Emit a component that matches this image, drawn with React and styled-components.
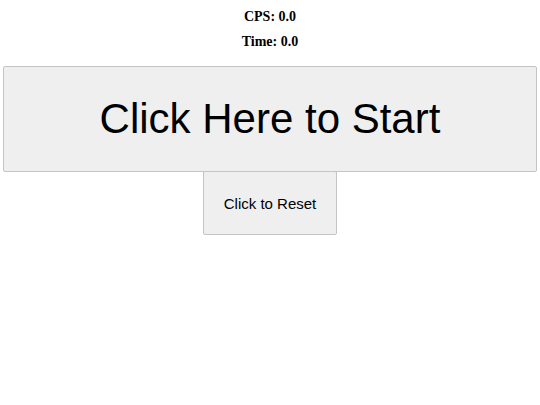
import React, { useState } from 'react'
import styled, { createGlobalStyle } from 'styled-components'

const GlobalStyle = createGlobalStyle`
  body {
    margin: 0;
    background: #fff;
    font-family: "Liberation Serif", "Times New Roman", serif;
  }
`

export default function App() {
  const [clicks, setClicks] = useState(0)
  const [time, setTime] = useState(0)

  const cps = time > 0 ? clicks / time : 0

  return (
    <Page>
      <GlobalStyle />
      <Stat>CPS: {cps.toFixed(1)}</Stat>
      <Stat>Time: {time.toFixed(1)}</Stat>
      <StartButton onClick={() => setClicks(clicks + 1)}>
        Click Here to Start
      </StartButton>
      <ResetButton onClick={() => { setClicks(0); setTime(0) }}>
        Click to Reset
      </ResetButton>
    </Page>
  )
}

// styled components
const Page = styled.div`
  display: flex;
  flex-direction: column;
  align-items: center;
  padding-top: 9px;
`

const Stat = styled.div`
  font-size: 14px;
  font-weight: bold;
  line-height: 15px;
  margin-bottom: 10px;
  color: #000;
`

const BaseButton = styled.button`
  font-family: "Liberation Sans", Arial, sans-serif;
  background: #efefef;
  border: 1px solid #c4c4c4;
  border-radius: 2px;
  color: #000;
  cursor: pointer;
  box-sizing: border-box;
`

const StartButton = styled(BaseButton)`
  width: 534px;
  height: 106px;
  margin-top: 7px;
  font-size: 42px;
`

const ResetButton = styled(BaseButton)`
  width: 134px;
  height: 64px;
  font-size: 15px;
  margin-top: -1px;
`
